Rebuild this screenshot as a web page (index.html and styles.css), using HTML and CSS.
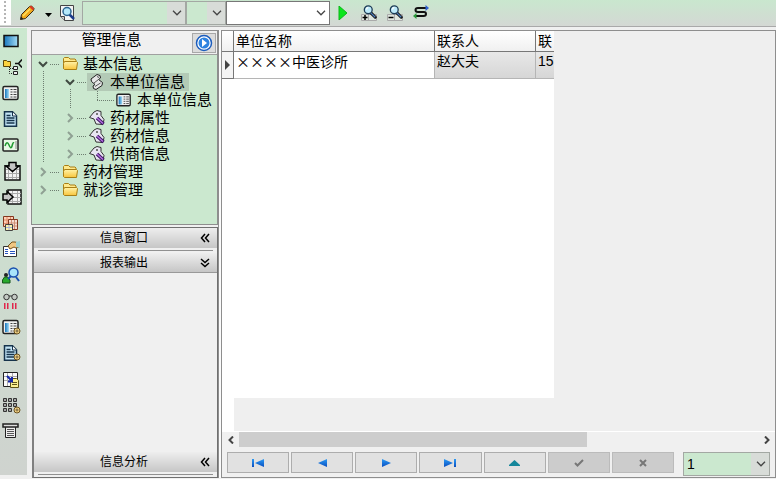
FILE: index.html
```html
<!-- index.html -->
<!DOCTYPE html>
<html lang="zh-CN">
  <head>
    <meta charset="UTF-8" />
    <meta name="viewport" content="width=device-width, initial-scale=1.0" />
    <title>管理信息</title>
    <link rel="stylesheet" href="styles.css">
  </head>
  <body>
    <!-- shared icons -->
    <svg class="defs" width="0" height="0" aria-hidden="true">
      <defs>
        <linearGradient id="g-blue" x1="0" y1="0" x2="1" y2="0">
          <stop offset="0" stop-color="#1676bd" />
          <stop offset="1" stop-color="#a5dcf5" />
        </linearGradient>
        <linearGradient id="g-folder" x1="0" y1="0" x2="0" y2="1">
          <stop offset="0" stop-color="#fff3a8" />
          <stop offset="1" stop-color="#f8c53c" />
        </linearGradient>
        <linearGradient id="g-nav" x1="0" y1="0" x2="0" y2="1">
          <stop offset="0" stop-color="#2a9af5" />
          <stop offset="1" stop-color="#0a4fc0" />
        </linearGradient>
      </defs>
      <symbol id="i-folder" viewBox="0 0 16 16">
        <path d="M1.500 12.500v-10l1-1h4l1.500 1.500h5l1 1v8.500z" fill="#ffe98a" stroke="#a87f16" />
        <path d="M2.500 13.500l-1-1v-5l1-2h12l1 1-1 7z" fill="url(#g-folder)" stroke="#a87f16" />
      </symbol>
      <symbol id="i-scroll" viewBox="0 0 16 16">
        <path d="M2 5l6-4.500 3 1 .5 2.500-2 1.500 4 3-.5 3-6 4-2.500-1-.5-2.500 2-1.500-3.500-3z" fill="#e6e6e6" stroke="#222" />
        <path d="M9.500 5.500L5 9M11.500 9L6 12.500M8 2.500l2 1" stroke="#555" fill="none" />
      </symbol>
      <symbol id="i-tag" viewBox="0 0 16 16">
        <path d="M5 2l3-1.500 4 1v4l3 4-1 5-7-.5-2-5-4.500-1.500z" fill="#e8e5f2" stroke="#333" />
        <path d="M7 3h2v2H7z" fill="#777" />
        <path d="M8 8l6.500 6" stroke="#3b1764" stroke-width="3.500" />
        <path d="M8 8l6 5.500" stroke="#b66fe0" stroke-width="1.500" />
      </symbol>
      <symbol id="i-form" viewBox="0 0 18 16">
        <rect x="1" y="1.500" width="15" height="13" rx="1.500" fill="#f1f1f1" stroke="#222" stroke-width="1.500" />
        <rect x="3" y="4" width="4" height="9" fill="url(#g-blue)" />
        <path d="M8.500 4.500h2m1 0h3M8.500 7h2m1 0h3M8.500 9.500h2m1 0h3M8.500 12h2m1 0h3" stroke="#444" />
      </symbol>
      <symbol id="i-doc" viewBox="0 0 18 16">
        <path d="M2.500.75h8l4 4v10.500h-12z" fill="#c2e4f5" stroke="#16334b" stroke-width="1.500" />
        <path d="M10.500 1v4h4" fill="#fff" stroke="#16334b" />
        <path d="M4.500 4.500h4M4.500 7h8M4.500 9.500h8M4.500 12h8" stroke="#16334b" stroke-width="1.500" />
      </symbol>
      <symbol id="i-gear" viewBox="0 0 8 8">
        <circle cx="4" cy="4" r="3" fill="#f2d48a" stroke="#6b5220" />
        <circle cx="4" cy="4" r="1" fill="#fff" stroke="#6b5220" />
      </symbol>
      <symbol id="i-lens" viewBox="0 0 16 16">
        <path d="M9 9l5 5" stroke="#111" stroke-width="3.500" stroke-linecap="round" />
        <path d="M9 9l5 5" stroke="#4d7fc0" stroke-width="1.500" />
        <circle cx="6" cy="5.500" r="4.500" fill="#bdeafa" stroke="#1d3b55" stroke-width="1.500" />
        <path d="M4 5q0-2 2-2" fill="none" stroke="#fff" stroke-width="1.500" />
      </symbol>
      <symbol id="i-down" viewBox="0 0 10 6">
        <path d="M1 .75l4 4 4-4" fill="none" stroke="#444" stroke-width="1.250" />
      </symbol>
      <symbol id="i-open" viewBox="0 0 10 10">
        <path d="M1 3l4 4 4-4" fill="none" stroke="#404a42" stroke-width="2" />
      </symbol>
      <symbol id="i-closed" viewBox="0 0 10 10">
        <path d="M3 1l4 4-4 4" fill="none" stroke="#8fa093" stroke-width="2" />
      </symbol>
      <symbol id="i-fold" viewBox="0 0 10 10">
        <path d="M5 1L1.500 5 5 9M9 1L5.500 5 9 9" fill="none" stroke="#000" stroke-width="1.500" />
      </symbol>
    </svg>

    <header class="toolbar">
      <span class="grip"></span>
      <button class="tool" aria-label="编辑">
        <svg width="16" height="16" viewBox="0 0 16 16">
          <path d="M1.500 14.500l1-5 8-8 2-.500 2.500 2.500-.500 2-8 8z" fill="#f0a91c" stroke="#3a2c10" />
          <path d="M4 11l7-7" stroke="#ffe25c" stroke-width="1.500" />
          <path d="M10.500 2l3.500 3.500 1-2-3-3z" fill="#dc3826" />
          <path d="M1.500 14.500l.5-3 2.500 2.500z" fill="#222" />
        </svg>
      </button>
      <button class="tool tool-drop" aria-label="更多编辑">
        <svg width="7" height="4" viewBox="0 0 7 4"><path d="M0 0h7L3.500 4z" /></svg>
      </button>
      <button class="tool" aria-label="预览">
        <svg width="16" height="16" viewBox="0 0 16 16">
          <path d="M1.500.5h13v15h-9l-4-4z" fill="#f4f4f4" stroke="#444" />
          <path d="M1.500 11.500h4v4" fill="#ccc" stroke="#444" />
          <path d="M10 9l5 5" stroke="#1d3b8a" stroke-width="2.500" />
          <circle cx="8" cy="6.500" r="4" fill="#b5e9fa" stroke="#2c6590" stroke-width="1.500" />
        </svg>
      </button>
      <div class="combos">
        <div class="combo combo-lg">
          <select aria-label="字段"><option></option></select>
          <svg class="caret" width="10" height="6"><use href="#i-down" /></svg>
        </div>
        <div class="combo combo-sm">
          <select aria-label="条件"><option></option></select>
          <svg class="caret" width="10" height="6"><use href="#i-down" /></svg>
        </div>
        <div class="combo combo-lg combo-white">
          <select aria-label="值"><option></option></select>
          <svg class="caret" width="10" height="6"><use href="#i-down" /></svg>
        </div>
      </div>
      <div class="tools">
        <button class="tool" aria-label="执行">
          <svg width="10" height="14" viewBox="0 0 10 14"><path d="M1 0l8 7-8 7z" fill="#0be61c" stroke="#0ab818" /></svg>
        </button>
        <button class="tool" aria-label="添加查询">
          <svg width="16" height="16" viewBox="0 0 16 16">
            <path d="M.5 9.500h15v6H.5zM7.500 9.500v6" fill="#dfe6df" stroke="#aaa" />
            <path d="M1.500 12.500h5M4 10v5" stroke="#000" stroke-width="1.500" />
            <use href="#i-lens" x="2" y="0" width="14" height="14" />
          </svg>
        </button>
        <button class="tool" aria-label="减少查询">
          <svg width="16" height="16" viewBox="0 0 16 16">
            <path d="M.5 9.500h15v6H.5zM7.500 9.500v6" fill="#dfe6df" stroke="#aaa" />
            <path d="M1.500 12.500h5" stroke="#000" stroke-width="1.500" />
            <use href="#i-lens" x="2" y="0" width="14" height="14" />
          </svg>
        </button>
        <button class="tool" aria-label="刷新">
          <svg width="16" height="16" viewBox="0 0 16 16">
            <path d="M13 3H5Q2.500 3 2.500 5T5 7h6q2 0 2 2t-2.500 2H2" fill="none" stroke="#111" stroke-width="2" />
            <path d="M12.500 0L16 3l-3.500 3z" fill="#2c5fd0" />
            <path d="M3.500 8L0 11l3.500 3z" fill="#2a9a3a" />
          </svg>
        </button>
      </div>
    </header>

    <main class="workspace">
      <nav class="rail" aria-label="工具">
        <button class="rail-btn" aria-label="窗口">
          <svg width="18" height="16" viewBox="0 0 18 16"><rect x="2" y="2.500" width="14" height="11" fill="url(#g-blue)" stroke="#111" stroke-width="1.500" /></svg>
        </button>
        <button class="rail-btn" aria-label="结构">
          <svg width="20" height="18" viewBox="0 0 20 18">
            <path d="M1.500 8.500v-6h3l1 1h3v5z" fill="#fbd33f" stroke="#5c4405" />
            <path d="M7.500 9v6.500h3M8 10.500h3" fill="none" stroke="#222" stroke-dasharray="1 1" />
            <path d="M11.500 8.500h4v3h-4zM11.500 13.500h4v3h-4z" fill="#eee" stroke="#222" />
            <path d="M13 5.500h3M20 1.500l-3.500 4 3.500 4" fill="none" stroke="#111" stroke-width="1.500" />
          </svg>
        </button>
        <button class="rail-btn" aria-label="表单"><svg width="18" height="16"><use href="#i-form" /></svg></button>
        <button class="rail-btn" aria-label="文档"><svg width="18" height="16"><use href="#i-doc" /></svg></button>
        <button class="rail-btn" aria-label="曲线">
          <svg width="18" height="16" viewBox="0 0 18 16">
            <rect x="1" y="2" width="15" height="12" rx="1" fill="#e9f9e5" stroke="#222" stroke-width="1.500" />
            <path d="M3 9q2-6 4-1t3 1q1-4 2-3" fill="none" stroke="#219a30" stroke-width="1.500" />
            <path d="M14 4v8" stroke="#888" />
          </svg>
        </button>
        <button class="rail-btn" aria-label="导入">
          <svg width="20" height="20" viewBox="0 0 20 20">
            <rect x="3" y="5" width="15" height="14" fill="#f3f3f3" stroke="#111" stroke-width="1.500" />
            <path d="M4 8.500h13M4 12.500h13M4 16.500h13M6.500 6v12M10.500 6v12M14.500 6v12" stroke="#aaa" />
            <path d="M7 1.500h7v3.500h3l-6.500 5.500L4 5h3z" fill="#c4c4c4" stroke="#000" stroke-width="1.500" />
          </svg>
        </button>
        <button class="rail-btn" aria-label="转入">
          <svg width="20" height="18" viewBox="0 0 20 18">
            <rect x="6" y="2" width="13" height="14" fill="#f3f3f3" stroke="#111" stroke-width="1.500" />
            <path d="M7 5.500h12M7 9.500h12M7 13.500h12M10.500 3v12M15.500 3v12" stroke="#aaa" />
            <path d="M1 6h4V3.500L11 9l-6 5.500V12H1z" fill="#c4c4c4" stroke="#000" stroke-width="1.500" />
          </svg>
        </button>
        <button class="rail-btn" aria-label="表格组">
          <svg width="18" height="17" viewBox="0 0 18 17">
            <path d="M1.500 1.500h10v10h-10z" fill="#ffd0b8" stroke="#84371e" />
            <path d="M5 2v9M8.500 2v9M2 5h9M2 8.500h9" stroke="#e08c68" />
            <path d="M6.500 4.500h9v10h-9z" fill="#f6ddd2" stroke="#84371e" />
            <path d="M9.500 5v9M12.500 5v9M7 8h8M7 11h8" stroke="#cf9077" />
            <path d="M3.500 9.500h7v6h-7z" fill="#fff6a8" stroke="#444" />
            <path d="M7 10v5M4 12.500h6" stroke="#a9b0d8" />
          </svg>
        </button>
        <button class="rail-btn" aria-label="属性">
          <svg width="18" height="16" viewBox="0 0 18 16">
            <path d="M1.500 5.500h13v10h-13z" fill="#fff" stroke="#333" />
            <path d="M3 8.500h3M3 10.500h3M3 12.500h3M8 10.500h5M8 12.500h5" stroke="#2a55c0" />
            <path d="M6 5l4-4h3l4 1v4l-3 1-2-1-4 2z" fill="#efc783" stroke="#76541c" />
            <path d="M14 1l4-1v7l-4-1z" fill="#9ed2d0" />
          </svg>
        </button>
        <button class="rail-btn" aria-label="查人">
          <svg width="18" height="17" viewBox="0 0 18 17">
            <circle cx="4" cy="8" r="2" fill="#222" />
            <path d="M.5 16v-3l2-3h3l2.500 3v3z" fill="#28a92c" stroke="#14551a" />
            <path d="M9 9l-3 3M14 10l3 4" stroke="#1a4fae" stroke-width="2" />
            <circle cx="11.500" cy="5.500" r="4.500" fill="#a9e4fb" stroke="#1a4fae" stroke-width="1.500" />
          </svg>
        </button>
        <button class="rail-btn" aria-label="观察">
          <svg width="18" height="17" viewBox="0 0 18 17">
            <circle cx="4.500" cy="4" r="2.750" fill="#c4cac4" stroke="#333" />
            <circle cx="12.500" cy="4" r="2.750" fill="#c4cac4" stroke="#333" />
            <path d="M7 3h3" stroke="#333" />
            <path d="M2 10h1.500v6H2zM5 10h1.500v6H5zM10 10h1.500v6H10zM13 10h1.500v6H13z" fill="#e0284c" />
          </svg>
        </button>
        <button class="rail-btn" aria-label="表单设置">
          <svg width="19" height="17" viewBox="0 0 19 17"><use href="#i-form" width="18" height="16" /><use href="#i-gear" x="11" y="8" width="8" height="8" /></svg>
        </button>
        <button class="rail-btn" aria-label="文档设置">
          <svg width="19" height="17" viewBox="0 0 19 17"><use href="#i-doc" width="18" height="16" /><use href="#i-gear" x="11" y="8" width="8" height="8" /></svg>
        </button>
        <button class="rail-btn" aria-label="导出">
          <svg width="18" height="17" viewBox="0 0 18 17">
            <path d="M1.500 1.500h14v14h-14z" fill="#fafafa" stroke="#222" />
            <path d="M2 5.500h13M2 9.500h13M5.500 2v13M10.500 2v13" stroke="#aaa" />
            <path d="M8.500 7.500h6l2 2v7h-8z" fill="#fbf293" stroke="#5d5415" />
            <path d="M10 11.500h5M10 13.500h5" stroke="#5d5415" />
            <path d="M5 5l5 5M10 6v4.500H6" fill="none" stroke="#1526a8" stroke-width="2" />
          </svg>
        </button>
        <button class="rail-btn" aria-label="网格设置">
          <svg width="19" height="17" viewBox="0 0 19 17">
            <path d="M1.500 1.500h3v3h-3zM6.500 1.500h3v3h-3zM11.500 1.500h3v3h-3zM1.500 6.500h3v3h-3zM6.500 6.500h3v3h-3zM11.500 6.500h3v3h-3zM1.500 11.500h3v3h-3zM6.500 11.500h3v3h-3z" fill="#a5a5a5" stroke="#333" />
            <use href="#i-gear" x="11" y="9" width="8" height="8" />
          </svg>
        </button>
        <button class="rail-btn" aria-label="打印">
          <svg width="18" height="16" viewBox="0 0 18 16">
            <path d="M3.500 3.500h10v11h-10z" fill="#eee" stroke="#222" />
            <path d="M1 1h15v3H1z" fill="#ddd" stroke="#222" stroke-width="1.500" />
            <path d="M5 6.500h7M5 8.500h7M5 10.500h7M5 12.500h7" stroke="#555" />
          </svg>
        </button>
      </nav>

      <aside class="sidebar">
        <section class="tree-panel">
          <div class="tree-head">
            <h1>管理信息</h1>
            <button class="go" aria-label="转到">
              <svg width="18" height="18" viewBox="0 0 18 18">
                <circle cx="9" cy="9" r="7.500" fill="#fff" stroke="#1b5cbd" stroke-width="1.500" />
                <circle cx="9" cy="9" r="5.500" fill="#2e83e0" />
                <path d="M7 5l5 4-5 4z" fill="#fff" />
              </svg>
            </button>
          </div>
          <ul class="tree">
            <li class="branch">
              <div class="node">
                <svg class="twist" width="10" height="10"><use href="#i-open" /></svg>
                <span class="dots"></span>
                <span class="label"><svg width="16" height="16"><use href="#i-folder" /></svg>基本信息</span>
              </div>
              <ul>
                <li class="branch">
                  <div class="node">
                    <svg class="twist" width="10" height="10"><use href="#i-open" /></svg>
                    <span class="dots"></span>
                    <span class="label selected"><svg width="16" height="16"><use href="#i-scroll" /></svg>本单位信息</span>
                  </div>
                  <ul>
                    <li class="leaf">
                      <div class="node">
                        <span class="dots dots-leaf"></span>
                        <span class="label"><svg width="16" height="16"><use href="#i-form" /></svg>本单位信息</span>
                      </div>
                    </li>
                  </ul>
                </li>
                <li>
                  <div class="node">
                    <svg class="twist" width="10" height="10"><use href="#i-closed" /></svg>
                    <span class="dots"></span>
                    <span class="label"><svg width="16" height="16"><use href="#i-tag" /></svg>药材属性</span>
                  </div>
                </li>
                <li>
                  <div class="node">
                    <svg class="twist" width="10" height="10"><use href="#i-closed" /></svg>
                    <span class="dots"></span>
                    <span class="label"><svg width="16" height="16"><use href="#i-tag" /></svg>药材信息</span>
                  </div>
                </li>
                <li>
                  <div class="node">
                    <svg class="twist" width="10" height="10"><use href="#i-closed" /></svg>
                    <span class="dots"></span>
                    <span class="label"><svg width="16" height="16"><use href="#i-tag" /></svg>供商信息</span>
                  </div>
                </li>
              </ul>
            </li>
            <li>
              <div class="node">
                <svg class="twist" width="10" height="10"><use href="#i-closed" /></svg>
                <span class="dots"></span>
                <span class="label"><svg width="16" height="16"><use href="#i-folder" /></svg>药材管理</span>
              </div>
            </li>
            <li>
              <div class="node">
                <svg class="twist" width="10" height="10"><use href="#i-closed" /></svg>
                <span class="dots"></span>
                <span class="label"><svg width="16" height="16"><use href="#i-folder" /></svg>就诊管理</span>
              </div>
            </li>
          </ul>
        </section>

        <section class="groups">
          <button class="group-head"><span>信息窗口</span><svg width="10" height="10"><use href="#i-fold" /></svg></button>
          <hr>
          <button class="group-head open"><span>报表输出</span><svg width="10" height="10" viewBox="0 0 10 10"><path d="M1 1l4 3.500L9 1M1 5l4 3.500L9 5" fill="none" stroke="#000" stroke-width="1.500" /></svg></button>
          <div class="group-body"></div>
          <button class="group-head"><span>信息分析</span><svg width="10" height="10"><use href="#i-fold" /></svg></button>
          <hr>
        </section>
      </aside>

      <section class="content">
        <div class="grid-area">
          <div class="grid">
            <table>
              <thead>
                <tr>
                  <th class="mark"></th>
                  <th class="col-name">单位名称</th>
                  <th class="col-person">联系人</th>
                  <th>联</th>
                </tr>
              </thead>
              <tbody>
                <tr>
                  <td class="mark"><svg width="5" height="10" viewBox="0 0 5 10"><path d="M0 0l5 5-5 5z" fill="#444" /></svg></td>
                  <td class="name">××××中医诊所</td>
                  <td>赵大夫</td>
                  <td>15</td>
                </tr>
              </tbody>
            </table>
          </div>
        </div>
        <div class="scrollbar">
          <button aria-label="向左滚动"><svg width="6" height="8" viewBox="0 0 6 8"><path d="M5 .5L1.500 4 5 7.500" fill="none" stroke="#444" stroke-width="2" /></svg></button>
          <div class="track"><div class="thumb"></div></div>
          <button aria-label="向右滚动"><svg width="6" height="8" viewBox="0 0 6 8"><path d="M1 .5L4.500 4 1 7.500" fill="none" stroke="#444" stroke-width="2" /></svg></button>
        </div>
        <footer class="pager">
          <div class="pager-btns">
            <button aria-label="第一条"><svg width="12" height="8" viewBox="0 0 12 8"><path d="M0 0h2v8H0zM12 0v8L3 4z" fill="url(#g-nav)" /></svg></button>
            <button aria-label="上一条"><svg width="9" height="8" viewBox="0 0 9 8"><path d="M9 0v8L0 4z" fill="url(#g-nav)" /></svg></button>
            <button aria-label="下一条"><svg width="9" height="8" viewBox="0 0 9 8"><path d="M0 0v8l9-4z" fill="url(#g-nav)" /></svg></button>
            <button aria-label="最后一条"><svg width="12" height="8" viewBox="0 0 12 8"><path d="M0 0v8l9-4zM10 0h2v8h-2z" fill="url(#g-nav)" /></svg></button>
            <button aria-label="编辑记录"><svg width="11" height="6" viewBox="0 0 11 6"><path d="M5.500 0L11 5v1H0V5z" fill="#15879b" /></svg></button>
            <button aria-label="保存" disabled><svg width="10" height="8" viewBox="0 0 10 8"><path d="M1 4l2.500 2.500L9 1" fill="none" stroke="#777" stroke-width="2" /></svg></button>
            <button aria-label="取消" disabled><svg width="8" height="8" viewBox="0 0 8 8"><path d="M1 1l6 6M7 1L1 7" fill="none" stroke="#777" stroke-width="2" /></svg></button>
          </div>
          <div class="combo combo-page">
            <select aria-label="页码"><option>1</option></select>
            <svg class="caret" width="10" height="6"><use href="#i-down" /></svg>
          </div>
        </footer>
      </section>
    </main>
  </body>
</html>
```

FILE: styles.css
```css
* {
  margin: 0;
  padding: 0;
  box-sizing: border-box;
}

body {
  display: flex;
  flex-direction: column;
  height: 100vh;
  overflow: hidden;
  background: #f0f0f0;
  color: #000;
  font-family: "Liberation Sans", "Noto Sans CJK SC", sans-serif;
  font-size: 15px;
}

button,
select {
  border: none;
  background: none;
  font: inherit;
  color: inherit;
}

ul {
  list-style: none;
}

svg {
  display: block;
  flex: none;
}

.defs {
  position: absolute;
}

/* top toolbar */
.toolbar {
  display: flex;
  flex: none;
  align-items: center;
  height: 27px;
  padding-bottom: 1px;
  background: linear-gradient(#c9e7ce, #d4d8d4);
  border-bottom: 1px solid #a9a9a9;
}

.grip {
  align-self: stretch;
  width: 11px;
  margin-right: 8px;
  background: radial-gradient(#b5b5b5 1px, transparent 1px) 3px 0 / 4px 4px repeat-y #fff;
}

.tool {
  display: flex;
  align-items: center;
}

.tool-drop {
  height: 20px;
  padding: 4px 7px 0 10px;
}

.combos {
  display: flex;
  margin-left: 7px;
}

.combo {
  position: relative;
  height: 24px;
  background: #d8dcd8;
  border: 1px solid #a3a8a3;
}

.combo select {
  display: block;
  width: calc(100% - 18px);
  height: 100%;
  padding-left: 3px;
  appearance: none;
  background: #cbe8cf;
}

.caret {
  position: absolute;
  top: 8px;
  right: 3px;
  pointer-events: none;
}

.combo-lg {
  width: 104px;
}

.combo-sm {
  width: 40px;
}

.combo-white,
.combo-white select {
  background: #fff;
}

.combo-white {
  border-color: #777;
}

.tools {
  display: flex;
  align-items: center;
  gap: 10px;
  margin-left: 8px;
}

.tools .tool:first-child {
  margin-right: 3px;
}

/* main area */
.workspace {
  display: flex;
  flex: 1;
  min-height: 0;
}

.rail {
  flex: none;
  width: 27px;
  margin: 1px 4px 4px 0;
  background: linear-gradient(#cbe8cf, #cfd3cf);
}

.rail-btn {
  display: flex;
  align-items: center;
  width: 100%;
  height: 26px;
  padding-left: 2px;
}

.sidebar {
  display: flex;
  flex-direction: column;
  flex: none;
  width: 187px;
  margin-top: 3px;
}

.tree-panel {
  flex: none;
  height: 195px;
  border: 1px solid #8e8e8e;
  background: #cbe8cf;
}

.tree-head {
  display: flex;
  height: 24px;
  background: #f0f0f0;
  border-bottom: 1px solid #a0a0a0;
}

.tree-head h1 {
  flex: 1;
  font-size: 15px;
  font-weight: normal;
  line-height: 18px;
  text-align: center;
}

.go {
  display: flex;
  align-items: center;
  justify-content: center;
  width: 24px;
  height: 20px;
  margin: 2px 1px;
  background: #dcdcdc;
  border: 1px solid #a8a8a8;
}

.tree {
  padding-left: 6px;
}

.tree ul {
  padding-left: 27px;
}

.tree li {
  position: relative;
}

.node {
  display: flex;
  align-items: center;
  height: 18px;
  line-height: 18px;
  white-space: nowrap;
}

.dots {
  width: 10px;
  height: 1px;
  margin-left: 2px;
  background: repeating-linear-gradient(90deg, #6d7d70 0 1px, transparent 1px 2px);
}

.dots-leaf {
  width: 17px;
  margin-left: 5px;
}

.label {
  display: flex;
  align-items: center;
  gap: 5px;
  height: 18px;
  padding: 0 4px 0 2px;
}

.selected {
  background: #b3cab6;
}

.branch::before,
.leaf::before {
  content: "";
  position: absolute;
  left: 5px;
  top: 16px;
  bottom: 0;
  width: 1px;
  background: repeating-linear-gradient(#6d7d70 0 1px, transparent 1px 2px);
}

.leaf::before {
  top: 0;
  bottom: 9px;
}

/* collapsible groups */
.groups {
  display: flex;
  flex-direction: column;
  flex: 1;
  margin: 2px 0 1px 1px;
  border: 1px solid #707070;
  border-left: 2px solid #808080;
}

.group-head {
  display: flex;
  align-items: center;
  flex: none;
  height: 20px;
  padding: 0 7px 0 14px;
  background: linear-gradient(#eee, #c6c6c6);
  font-size: 12px;
  line-height: 18px;
}

.group-head span {
  flex: 1;
  text-align: center;
}

.group-head.open {
  border-bottom: 1px solid #999;
}

.groups hr {
  height: 1px;
  margin: 2px 4px;
  border: none;
  background: #909090;
}

.group-body {
  flex: 1;
}

/* data grid */
.content {
  display: flex;
  flex-direction: column;
  flex: 1;
  min-width: 0;
  margin: 3px 0 1px 3px;
  border: 1px solid #8e8e8e;
  box-shadow: -2px 0 #fafafa, -3px 0 #8e8e8e;
}

.grid-area {
  flex: 1;
  min-height: 0;
  padding-bottom: 33px;
  background: linear-gradient(90deg, #fff 12px, #efefef 12px);
}

.grid {
  width: 60%;
  height: 100%;
  overflow: hidden;
  background: #fff;
}

table {
  width: 100%;
  table-layout: fixed;
  border-collapse: separate;
  border-spacing: 0;
  font-size: 14px;
}

th,
td {
  height: 27px;
  padding: 0 0 0 2px;
  line-height: 18px;
  text-align: left;
  vertical-align: top;
  font-weight: normal;
  white-space: nowrap;
  background: linear-gradient(#e8e8e8, #d6d6d6);
  border-right: 1px solid #b5b5b5;
  border-bottom: 1px solid #b5b5b5;
}

th {
  height: 21px;
  line-height: 20px;
  background: linear-gradient(#fff, #f0f0f0);
  border-color: #777;
}

th:last-child,
td:last-child {
  border-right: none;
}

.mark {
  width: 12px;
  padding: 0 3px;
}

td.mark {
  vertical-align: middle;
  background: #f4f4f4;
  border-color: #777;
}

/* full-width × signs */
td.name {
  background: #fff;
  font-family: "Noto Sans CJK SC", sans-serif;
}

.col-name {
  width: 201px;
}

.col-person {
  width: 101px;
}

.scrollbar {
  display: flex;
  flex: none;
  height: 16px;
  border-top: 1px solid #fff;
}

.scrollbar button {
  display: flex;
  align-items: center;
  justify-content: center;
  width: 17px;
}

.track {
  flex: 1;
}

.thumb {
  width: 67%;
  height: 100%;
  background: #cdcdcd;
}

.pager {
  display: flex;
  flex: none;
  gap: 9px;
  padding: 5px 5px 1px;
}

.pager-btns {
  display: flex;
  flex: 1;
  gap: 2px;
}

.pager-btns button {
  display: flex;
  align-items: center;
  justify-content: center;
  flex: 1;
  height: 21px;
  background: #e1e1e1;
  border: 1px solid #adadad;
}

.pager-btns button:disabled {
  background: #cccccc;
  border-color: #bbb;
}

.combo-page {
  width: 87px;
  font-size: 14px;
}
```
